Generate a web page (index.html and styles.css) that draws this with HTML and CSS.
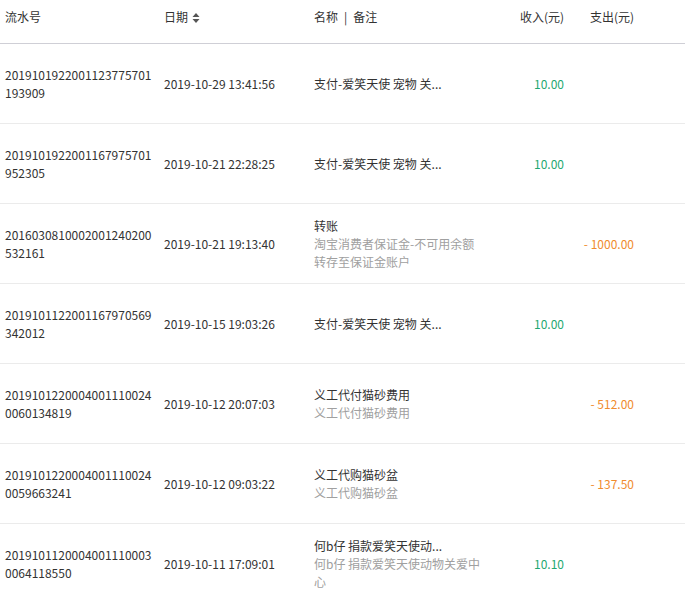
FILE: index.html
```html
<!DOCTYPE html>
<html lang="zh-CN">
<head>
<meta charset="utf-8">
<title>账务明细</title>
<link rel="stylesheet" href="styles.css">
</head>
<body>
<div class="table">
  <div class="row head">
    <div class="cell">流水号</div>
    <div class="cell">日期 <svg class="sort" viewBox="0 0 8 10" width="8" height="10"><path d="M4 0L7.5 4H0.5Z M4 10L7.5 6H0.5Z"/></svg></div>
    <div class="cell">名称<span class="bar">|</span>备注</div>
    <div class="cell num">收入(元)</div>
    <div class="cell num">支出(元)</div>
  </div>

  <div class="row">
    <div class="cell">2019101922001123775701<br>193909</div>
    <div class="cell">2019-10-29 13:41:56</div>
    <div class="cell"><div class="title">支付-爱笑天使 宠物 关...</div></div>
    <div class="cell num in">10.00</div>
    <div class="cell num out"></div>
  </div>

  <div class="row">
    <div class="cell">2019101922001167975701<br>952305</div>
    <div class="cell">2019-10-21 22:28:25</div>
    <div class="cell"><div class="title">支付-爱笑天使 宠物 关...</div></div>
    <div class="cell num in">10.00</div>
    <div class="cell num out"></div>
  </div>

  <div class="row">
    <div class="cell">2016030810002001240200<br>532161</div>
    <div class="cell">2019-10-21 19:13:40</div>
    <div class="cell"><div class="title">转账</div><div class="memo">淘宝消费者保证金-不可用余额<br>转存至保证金账户</div></div>
    <div class="cell num in"></div>
    <div class="cell num out">- 1000.00</div>
  </div>

  <div class="row">
    <div class="cell">2019101122001167970569<br>342012</div>
    <div class="cell">2019-10-15 19:03:26</div>
    <div class="cell"><div class="title">支付-爱笑天使 宠物 关...</div></div>
    <div class="cell num in">10.00</div>
    <div class="cell num out"></div>
  </div>

  <div class="row">
    <div class="cell">2019101220004001110024<br>0060134819</div>
    <div class="cell">2019-10-12 20:07:03</div>
    <div class="cell"><div class="title">义工代付猫砂费用</div><div class="memo">义工代付猫砂费用</div></div>
    <div class="cell num in"></div>
    <div class="cell num out">- 512.00</div>
  </div>

  <div class="row">
    <div class="cell">2019101220004001110024<br>0059663241</div>
    <div class="cell">2019-10-12 09:03:22</div>
    <div class="cell"><div class="title">义工代购猫砂盆</div><div class="memo">义工代购猫砂盆</div></div>
    <div class="cell num in"></div>
    <div class="cell num out">- 137.50</div>
  </div>

  <div class="row">
    <div class="cell">2019101120004001110003<br>0064118550</div>
    <div class="cell">2019-10-11 17:09:01</div>
    <div class="cell"><div class="title">何b仔 捐款爱笑天使动...</div><div class="memo">何b仔 捐款爱笑天使动物关爱中<br>心</div></div>
    <div class="cell num in">10.10</div>
    <div class="cell num out"></div>
  </div>
</div>
</body>
</html>
```

FILE: styles.css
```css
html, body {
  margin: 0;
  padding: 0;
  background: #fff;
}
body {
  font-family: "Microsoft YaHei", "Noto Sans CJK SC", "Liberation Sans", sans-serif;
  font-size: 12px;
  line-height: 18px;
  color: #333;
}
.table {
  width: 685px;
}
.row {
  display: grid;
  grid-template-columns: 159px 150px 170px 80px 70px 1fr;
  align-items: center;
  padding-left: 5px;
  height: 80px;
  box-sizing: border-box;
  border-bottom: 1px solid #ebebeb;
}
.row.head {
  height: 44px;
  padding-bottom: 9px;
  border-bottom: 1px solid #cfcfd6;
}
.cell {
  white-space: nowrap;
}
.bar {
  margin: 0 6px;
}
.num {
  text-align: right;
}
.in {
  color: #1fa971;
}
.out {
  color: #f08c2e;
}
.memo {
  color: #a0a0a0;
}
.sort {
  fill: #555;
  vertical-align: -1px;
  margin-left: 1px;
}
```
